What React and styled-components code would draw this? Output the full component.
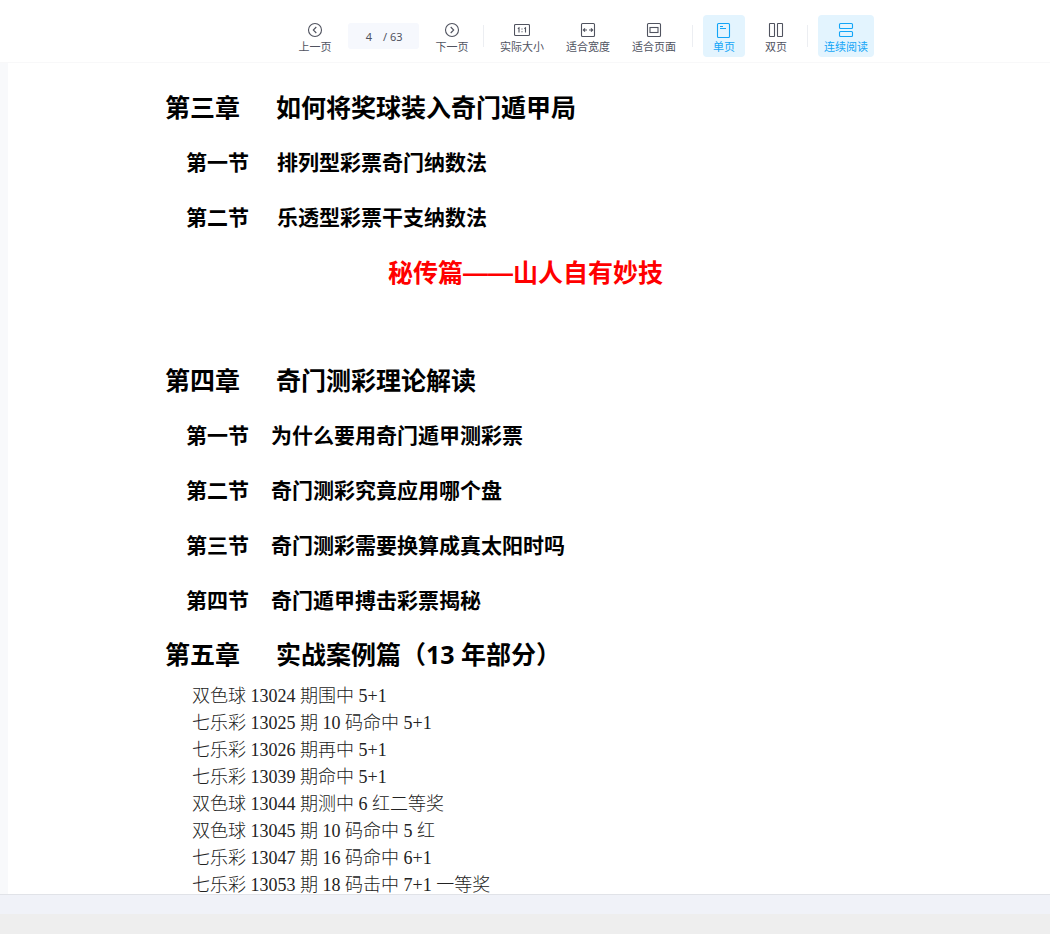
import React, { useState } from "react";
import styled, { createGlobalStyle } from "styled-components";

const chapters = [
  {
    label: "第三章",
    title: "如何将奖球装入奇门遁甲局",
    sections: [
      ["第一节", "排列型彩票奇门纳数法"],
      ["第二节", "乐透型彩票干支纳数法"],
    ],
    wide: true,
  },
  {
    label: "第四章",
    title: "奇门测彩理论解读",
    sections: [
      ["第一节", "为什么要用奇门遁甲测彩票"],
      ["第二节", "奇门测彩究竟应用哪个盘"],
      ["第三节", "奇门测彩需要换算成真太阳时吗"],
      ["第四节", "奇门遁甲搏击彩票揭秘"],
    ],
  },
  { label: "第五章", title: "实战案例篇（13 年部分）", sections: [] },
];

const cases = [
  "双色球 13024 期围中 5+1",
  "七乐彩 13025 期 10 码命中 5+1",
  "七乐彩 13026 期再中 5+1",
  "七乐彩 13039 期命中 5+1",
  "双色球 13044 期测中 6 红二等奖",
  "双色球 13045 期 10 码命中 5 红",
  "七乐彩 13047 期 16 码命中 6+1",
  "七乐彩 13053 期 18 码击中 7+1 一等奖",
];

const icons = {
  prev: (
    <>
      <circle cx="8" cy="8" r="6.5" />
      <path d="M9.3 5 6.3 8l3 3" />
    </>
  ),
  next: (
    <>
      <circle cx="8" cy="8" r="6.5" />
      <path d="m6.7 5 3 3-3 3" />
    </>
  ),
  actual: (
    <>
      <rect x="0.5" y="2.5" width="15" height="11" rx="1" />
      <path d="M3.8 6.6 5 5.8v4.7M10.3 6.6l1.2-.8v4.7M8 6.4v1M8 9.2v1" />
    </>
  ),
  width: (
    <>
      <rect x="1.5" y="1.5" width="13" height="13" rx="1" />
      <path d="M3.5 8h3.5M9 8h3.5M5 6.3 3.3 8 5 9.7M11 6.3 12.7 8 11 9.7" />
    </>
  ),
  page: (
    <>
      <rect x="1.5" y="1.5" width="13" height="13" rx="1" />
      <rect x="4" y="5.5" width="8" height="5" />
    </>
  ),
  single: (
    <>
      <rect x="1.5" y="1.5" width="12" height="14" rx="1" />
      <path d="M4 4.5h3M4 6.5h6" />
    </>
  ),
  double: (
    <>
      <rect x="1.5" y="1.5" width="5" height="13" rx="0.5" />
      <rect x="9.5" y="1.5" width="5" height="13" rx="0.5" />
    </>
  ),
  scroll: (
    <>
      <rect x="1.5" y="1.5" width="13" height="5" rx="1" />
      <rect x="1.5" y="9.5" width="13" height="5" rx="1" />
    </>
  ),
};

const Tool = ({ icon, label, wide, active, onClick }) => (
  <ToolButton type="button" $wide={wide} $active={active} onClick={onClick}>
    <Icon viewBox="0 0 16 16" aria-hidden="true">
      {icons[icon]}
    </Icon>
    {label}
  </ToolButton>
);

const App = () => {
  const [page, setPage] = useState("4");
  const [double, setDouble] = useState(false);
  const [scroll, setScroll] = useState(true);

  const step = (n) =>
    setPage(String(Math.min(63, Math.max(1, Number(page) + n))));

  return (
    <Shell>
      <GlobalStyle />
      <Toolbar>
        <Tool icon="prev" label="上一页" onClick={() => step(-1)} />
        <Pager>
          <PageInput
            aria-label="页码"
            value={page}
            onChange={(e) => setPage(e.target.value)}
          />
          <span>/ 63</span>
        </Pager>
        <Tool icon="next" label="下一页" onClick={() => step(1)} />
        <Divider />
        <Tool icon="actual" label="实际大小" wide />
        <Tool icon="width" label="适合宽度" wide />
        <Tool icon="page" label="适合页面" wide />
        <Divider />
        <Tool
          icon="single"
          label="单页"
          active={!double}
          onClick={() => setDouble(false)}
        />
        <Tool
          icon="double"
          label="双页"
          active={double}
          onClick={() => setDouble(true)}
        />
        <Divider />
        <Tool
          icon="scroll"
          label="连续阅读"
          wide
          active={scroll}
          onClick={() => setScroll(!scroll)}
        />
      </Toolbar>

      <Viewer>
        <Sheet>
          {chapters.map((chapter) => (
            <React.Fragment key={chapter.label}>
              <Chapter>
                <span>{chapter.label}</span>
                <span>{chapter.title}</span>
              </Chapter>
              {chapter.sections.map(([label, title]) => (
                <Section key={label} $wide={chapter.wide}>
                  <span>{label}</span>
                  <span>{title}</span>
                </Section>
              ))}
              {chapter.wide && (
                <PartTitle>
                  秘传篇<Dash>——</Dash>山人自有妙技
                </PartTitle>
              )}
            </React.Fragment>
          ))}
          <CaseList>
            {cases.map((text) => (
              <li key={text}>{text}</li>
            ))}
          </CaseList>
        </Sheet>
      </Viewer>

      <StatusBar />
      <BottomBar />
    </Shell>
  );
};

export default App;

// Styled Components
const GlobalStyle = createGlobalStyle`
  * {
    box-sizing: border-box;
  }

  body {
    margin: 0;
    background-color: #fff;
    font-family: "Noto Sans CJK SC", sans-serif;
  }
`;

const Shell = styled.div`
  height: 100vh;
  display: flex;
  flex-direction: column;
`;

const Toolbar = styled.header`
  flex: none;
  display: flex;
  justify-content: center;
  align-items: center;
  gap: 10px;
  padding: 15px 0 5px 118px;
  border-bottom: 1px solid #f8f8f9;
`;

const ToolButton = styled.button`
  flex: none;
  width: ${({ $wide }) => ($wide ? "56px" : "42px")};
  height: 42px;
  padding: 3px 0 0;
  display: flex;
  flex-direction: column;
  align-items: center;
  justify-content: center;
  border: 0;
  border-radius: 4px;
  background-color: ${({ $active }) => ($active ? "#e3f4fe" : "transparent")};
  color: ${({ $active }) => ($active ? "#12a5f7" : "#50535f")};
  font-family: inherit;
  font-size: 11px;
  line-height: 16px;
  white-space: nowrap;
  cursor: pointer;
`;

const Icon = styled.svg`
  width: 16px;
  height: 16px;
  fill: none;
  stroke: currentColor;
  stroke-width: 1.1;
`;

const Pager = styled.div`
  display: flex;
  align-items: center;
  width: 71px;
  height: 26px;
  margin: 0 2px;
  border-radius: 3px;
  background-color: #f6f8fd;
  color: #50535f;
  font-family: "Noto Sans", "Noto Sans CJK SC", sans-serif;
  font-size: 11px;
`;

const PageInput = styled.input`
  width: 35px;
  padding: 0 0 0 7px;
  border: 0;
  outline: 0;
  background: transparent;
  color: inherit;
  font: inherit;
  text-align: center;
`;

const Divider = styled.div`
  width: 1px;
  height: 22px;
  background-color: #eceef2;
`;

const Viewer = styled.main`
  flex: 1;
  min-height: 0;
  overflow: hidden;
  padding-left: 8px;
  background-color: #f8f9fb;
`;

const Sheet = styled.article`
  min-height: 100%;
  padding: 17px 164px 0 157px;
  background-color: #fff;
  color: #000;
`;

const Chapter = styled.h2`
  display: flex;
  gap: 36px;
  margin: 0;
  font-family: "Open Sans", "Noto Sans CJK SC", sans-serif;
  font-size: 25px;
  font-weight: 700;
  line-height: 54px;
  white-space: nowrap;
`;

const Section = styled.h3`
  display: flex;
  gap: ${({ $wide }) => ($wide ? "28px" : "22px")};
  margin: 0;
  padding-left: 21px;
  font-size: 21px;
  font-weight: 700;
  line-height: 55px;
  white-space: nowrap;
`;

const PartTitle = styled.h1`
  margin: 0 0 54px;
  color: #f00;
  font-size: 25px;
  font-weight: 700;
  line-height: 55px;
  text-align: center;
`;

// full-width dashes that join into one line
const Dash = styled.span`
  font-family: "Liberation Sans", sans-serif;
  line-height: 1;
`;

const CaseList = styled.ul`
  margin: 2px 0 0;
  padding: 0 0 0 27px;
  list-style: none;
  color: #222;
  font-family: "Liberation Serif", "Noto Sans CJK SC", serif;
  font-size: 18px;
  font-weight: 300;
  line-height: 27px;
`;

const StatusBar = styled.div`
  flex: none;
  height: 20px;
  border-top: 1px solid #e1e3e8;
  background-color: #f0f2f8;
`;

const BottomBar = styled.footer`
  flex: none;
  height: 20px;
  background-color: #eee;
`;
